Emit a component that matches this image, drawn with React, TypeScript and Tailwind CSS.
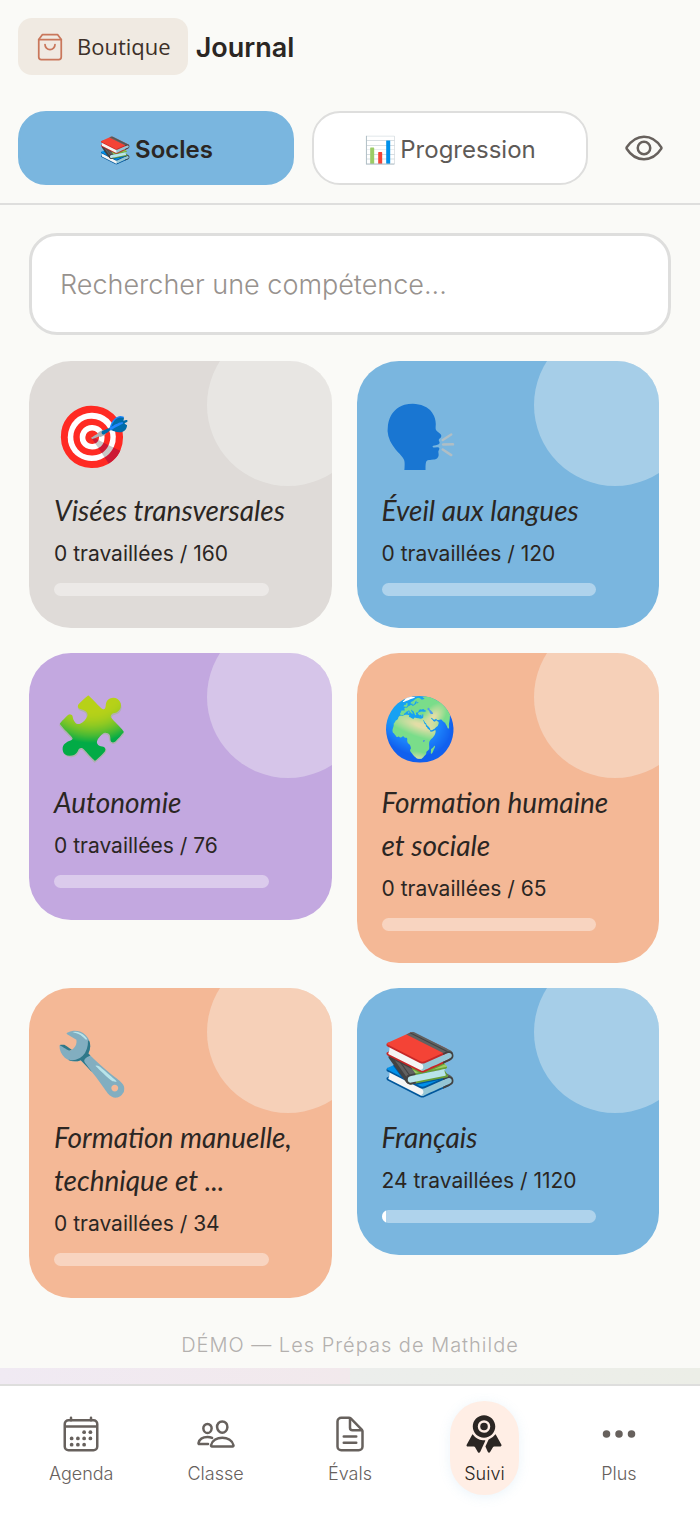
import React from 'react';
import {
  IoCalendarOutline,
  IoDocumentTextOutline,
  IoEllipsisHorizontal,
  IoEyeOutline,
  IoPeopleOutline,
  IoRibbon,
} from 'react-icons/io5';

const skills = [
  { emoji: '🎯', title: 'Visées transversales', done: 0, total: 160, color: 'bg-[#dfdbd8]' },
  { emoji: '🗣️', title: 'Éveil aux langues', done: 0, total: 120, color: 'bg-[#7ab6df]' },
  { emoji: '🧩', title: 'Autonomie', done: 0, total: 76, color: 'bg-[#c3a8e0]' },
  { emoji: '🌍', title: 'Formation humaine et sociale', done: 0, total: 65, color: 'bg-[#f4b896]' },
  { emoji: '🔧', title: 'Formation manuelle, technique et ...', done: 0, total: 34, color: 'bg-[#f4b896]' },
  { emoji: '📚', title: 'Français', done: 24, total: 1120, color: 'bg-[#7ab6df]' },
];

const tabs = [
  { label: 'Agenda', icon: IoCalendarOutline },
  { label: 'Classe', icon: IoPeopleOutline },
  { label: 'Évals', icon: IoDocumentTextOutline },
  { label: 'Suivi', icon: IoRibbon, active: true },
  { label: 'Plus', icon: IoEllipsisHorizontal },
];

const IconBag = () => (
  <svg width="30" height="30" viewBox="0 0 24 24" fill="none" stroke="#c9775b" strokeWidth="1.4" strokeLinecap="round" strokeLinejoin="round">
    <path d="M6 2 3 6v14a2 2 0 0 0 2 2h14a2 2 0 0 0 2-2V6l-3-4Z" />
    <path d="M3 6h18" />
    <path d="M16 10a4 4 0 0 1-8 0" />
  </svg>
);

const SkillCard: React.FC<{ skill: (typeof skills)[number] }> = ({ skill }) => (
  <button className={`relative overflow-hidden rounded-[42px] px-[25px] pt-[22px] pb-8 text-left ${skill.color}`}>
    <span className="absolute -top-[37px] -right-[37px] size-[162px] rounded-full bg-[#f8fbf8]/35" />
    <span className="flex h-[106px] items-center text-[61px] leading-none">{skill.emoji}</span>
    <span className="block font-['Lato',sans-serif] text-[28px] leading-[43px] italic">{skill.title}</span>
    <span className="block text-[21px] leading-[44px]">
      {skill.done} travaillées / {skill.total}
    </span>
    <span className="mt-[7px] block h-[13px] w-[85%] overflow-hidden rounded-full bg-white/40">
      <span className="block h-full bg-white" style={{ width: `${(skill.done / skill.total) * 100}%` }} />
    </span>
  </button>
);

const App: React.FC = () => {
  return (
    <div className="flex min-h-screen flex-col bg-[#fafaf7] font-['Inter',sans-serif] text-[#2b2623]">
      <header className="border-b-2 border-[#dededd] px-[18px] pt-[18px] pb-[18px]">
        <div className="flex items-center gap-2">
          <button className="flex h-[57px] items-center gap-3 rounded-[14px] bg-[#f0eae2] px-[17px] font-['Open_Sans',sans-serif] text-[22px] font-medium text-[#3d3029]">
            <IconBag />
            Boutique
          </button>
          <h1 className="pt-1 text-[27px] font-semibold">Journal</h1>
        </div>
        <div className="mt-9 flex gap-[18px]">
          <button className="flex h-[74px] flex-1 items-center justify-center gap-1 rounded-[28px] border-2 border-[#7ab6df] bg-[#7ab6df] pt-1 text-[24px] font-semibold">
            <span className="text-[26px] leading-8">📚</span>
            Socles
          </button>
          <button className="flex h-[74px] flex-1 items-center justify-center gap-1 rounded-[28px] border-2 border-[#dededd] bg-white pt-1 text-[24px] text-[#5e5a57]">
            <span className="text-[26px] leading-8">📊</span>
            Progression
          </button>
          <button aria-label="Afficher" className="flex w-[76px] items-center justify-center text-[#67615d]">
            <IoEyeOutline size={40} />
          </button>
        </div>
      </header>

      <main className="flex-1 px-[29px] pt-7">
        <input
          type="text"
          aria-label="Rechercher une compétence"
          placeholder="Rechercher une compétence..."
          className="block h-[102px] w-full rounded-[28px] border-[3px] border-[#dededd] bg-white px-7 text-[27px] font-light placeholder:text-[#97928e]"
        />
        <div className="mt-[26px] mr-3 grid grid-cols-2 items-start gap-[25px]">
          {skills.map((skill) => (
            <SkillCard key={skill.title} skill={skill} />
          ))}
        </div>
      </main>

      <p className="pt-7 pb-[9px] text-center text-xl font-light tracking-wider text-[#b3b0ae]">
        DÉMO — Les Prépas de Mathilde
      </p>
      <div className="flex h-4">
        <div className="flex-1 bg-linear-to-r from-[#f0eaf3] to-[#f2e9ec]" />
        <div className="flex-1 bg-linear-to-r from-[#eceeec] to-[#eceee7]" />
      </div>
      <nav className="sticky bottom-0 flex border-t-2 border-[#dededd] bg-white px-[14px] pt-[15px] pb-5">
        {tabs.map(({ label, icon: Icon, active }) => (
          <a
            key={label}
            href={`#${label}`}
            className="flex flex-1 justify-center"
          >
            <span
              className={`flex min-w-[68px] flex-col items-center gap-[7px] rounded-[34px] px-[14px] pt-[13px] pb-[9px] text-[18px] leading-[25px] font-light ${
                active ? 'bg-[#ffeee5] text-[#2b2623] shadow-[0_2px_12px_rgba(122,182,223,0.15)]' : 'text-[#67615d]'
              }`}
            >
              <Icon size={40} />
              {label}
            </span>
          </a>
        ))}
      </nav>
    </div>
  );
};

export default App;
